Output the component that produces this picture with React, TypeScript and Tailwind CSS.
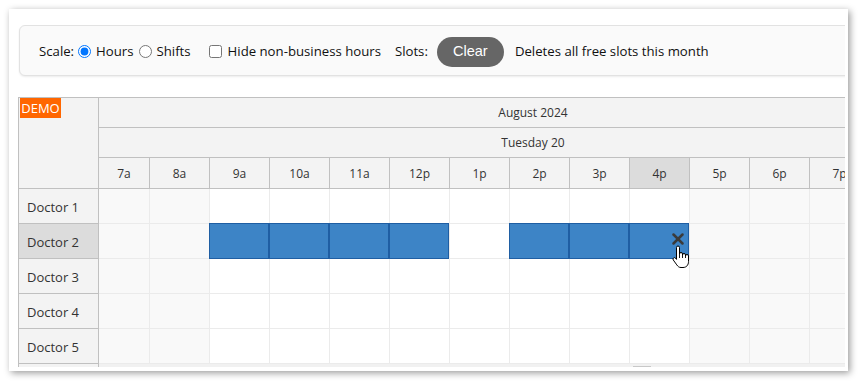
import React from 'react';
import { X } from 'lucide-react';

const hours = ['7a', '8a', '9a', '10a', '11a', '12p', '1p', '2p', '3p', '4p', '5p', '6p', '7p'];
const business = new Set(['9a', '10a', '11a', '12p', '1p', '2p', '3p', '4p']);
const doctors = ['Doctor 1', 'Doctor 2', 'Doctor 3', 'Doctor 4', 'Doctor 5'];

// free slots on Doctor 2
const slots = new Set(['9a', '10a', '11a', '12p', '2p', '3p', '4p']);

const HandCursor = () => (
  <svg width="19" height="24" viewBox="0 0 19 24" className="absolute left-[42px] top-[21px] z-20">
    <path
      d="M4.5 2.5a1.5 1.5 0 0 1 3 0V9a1.5 1.5 0 0 1 3 0v1a1.5 1.5 0 0 1 3 0v1a1.5 1.5 0 0 1 3 0v5.5c0 3.5-2 6-5.5 6H9c-2 0-3-1-4.2-2.6L1.3 15a1.4 1.4 0 0 1 2.2-1.8l1 1.2Z"
      fill="#fff"
      stroke="#000"
      strokeWidth="1"
      strokeLinejoin="round"
    />
    <path d="M7.5 9v4M10.5 10v3M13.5 11v2" stroke="#000" strokeWidth="0.9" />
  </svg>
);

export default function App() {
  return (
    <div className="w-[860px] h-[382px] bg-white overflow-hidden pt-[9px] pl-[9px] font-['Open_Sans','Noto_Sans',sans-serif]">
      <div className="w-[839px] h-[362px] bg-white shadow-[2px_2px_7px_rgba(0,0,0,0.4)] pt-[16px] pl-[9px]">
        <div className="w-[827px] overflow-hidden">
          {/* toolbar */}
          <div className="ml-[1px] w-[840px] h-[51px] bg-[#fafafa] border border-[#e2e2e2] rounded-[6px] shadow-[0_1px_2px_rgba(0,0,0,0.08)] flex items-center pl-[19px] pt-[2px] text-[13.2px] text-[#111]">
            <span>Scale:</span>
            <label className="flex items-center ml-[4px]">
              <input type="radio" name="scale" defaultChecked className="m-0 w-[13px] h-[13px]" />
              <span className="ml-[5px]">Hours</span>
            </label>
            <label className="flex items-center ml-[5px]">
              <input type="radio" name="scale" className="m-0 w-[13px] h-[13px]" />
              <span className="ml-[5px]">Shifts</span>
            </label>
            <label className="flex items-center ml-[18px]">
              <input type="checkbox" className="m-0 w-[13px] h-[13px]" />
              <span className="ml-[6px]">Hide non-business hours</span>
            </label>
            <span className="ml-[14px]">Slots:</span>
            <button className="ml-[9px] w-[67px] h-[30px] rounded-full bg-[#666] text-white text-[14.5px] font-['Liberation_Sans',Arial,sans-serif]">
              Clear
            </button>
            <span className="ml-[11px]">Deletes all free slots this month</span>
          </div>

          {/* scheduler */}
          <div className="mt-[21px] h-[270px] overflow-hidden flex border-t border-l border-[#c0c0c0] text-[#333]">
            <div className="w-[80px] shrink-0 border-r border-[#c0c0c0] bg-[#f3f3f3]">
              <div className="h-[91px] border-b border-[#c0c0c0] pl-[1px]">
                <div className="w-[41px] h-[20px] bg-[#ff6600] text-white text-[13px] leading-[20px] text-center">DEMO</div>
              </div>
              {doctors.map((d) => (
                <div
                  key={d}
                  className={`h-[35px] border-b border-[#c0c0c0] flex items-center pl-[8px] pt-[3px] text-[13px] ${
                    d === 'Doctor 2' ? 'bg-[#dcdcdc]' : 'bg-[#f3f3f3]'
                  }`}
                >
                  {d}
                </div>
              ))}
              <div className="h-[10px] bg-[#f3f3f3]" />
            </div>

            <div className="flex-1 overflow-hidden">
              <div className="h-[30px] border-b border-[#c0c0c0] bg-[#f3f3f3] w-[2000px]">
                <div className="w-[868px] h-full flex items-center justify-center pt-[1px] text-[12px]">August 2024</div>
              </div>
              <div className="h-[30px] border-b border-[#c0c0c0] bg-[#f3f3f3] w-[2000px]">
                <div className="w-[868px] h-full flex items-center justify-center text-[12px]">Tuesday 20</div>
              </div>
              <div className="h-[31px] border-b border-[#c0c0c0] bg-[#f3f3f3] flex w-[2000px]">
                {hours.map((h, i) => (
                  <div
                    key={h}
                    className={`shrink-0 h-full border-r border-[#c0c0c0] flex items-center justify-center pt-[1px] text-[12px] ${
                      i === 0 ? 'w-[51px]' : 'w-[60px]'
                    } ${h === '4p' ? 'bg-[#dcdcdc]' : ''}`}
                  >
                    {h}
                  </div>
                ))}
              </div>
              {doctors.map((d) => (
                <div key={d} className="h-[35px] flex w-[2000px]">
                  {hours.map((h, i) => {
                    const slot = d === 'Doctor 2' && slots.has(h);
                    return (
                      <div
                        key={h}
                        className={`relative shrink-0 h-full border-r border-b border-[#ebebeb] ${
                          i === 0 ? 'w-[51px]' : 'w-[60px]'
                        } ${business.has(h) ? 'bg-white' : 'bg-[#f9f9f9]'}`}
                      >
                        {slot && (
                          <div className="absolute top-[-1px] left-[-1px] right-0 bottom-[-1px] z-10 bg-[#3d84c6] border border-[#1f5ea3]">
                            {h === '4p' && (
                              <X size={18} strokeWidth={3.4} className="absolute right-[1px] top-[6px] text-[#3b3b3b]" />
                            )}
                          </div>
                        )}
                        {slot && h === '4p' && <HandCursor />}
                      </div>
                    );
                  })}
                </div>
              ))}
              <div className="relative h-[5px] bg-[#f1f1f1]">
                <div className="absolute left-[534px] top-[2px] w-[18px] h-[3px] bg-[#c8c8c8]" />
              </div>
            </div>
          </div>
        </div>
      </div>
    </div>
  );
}
